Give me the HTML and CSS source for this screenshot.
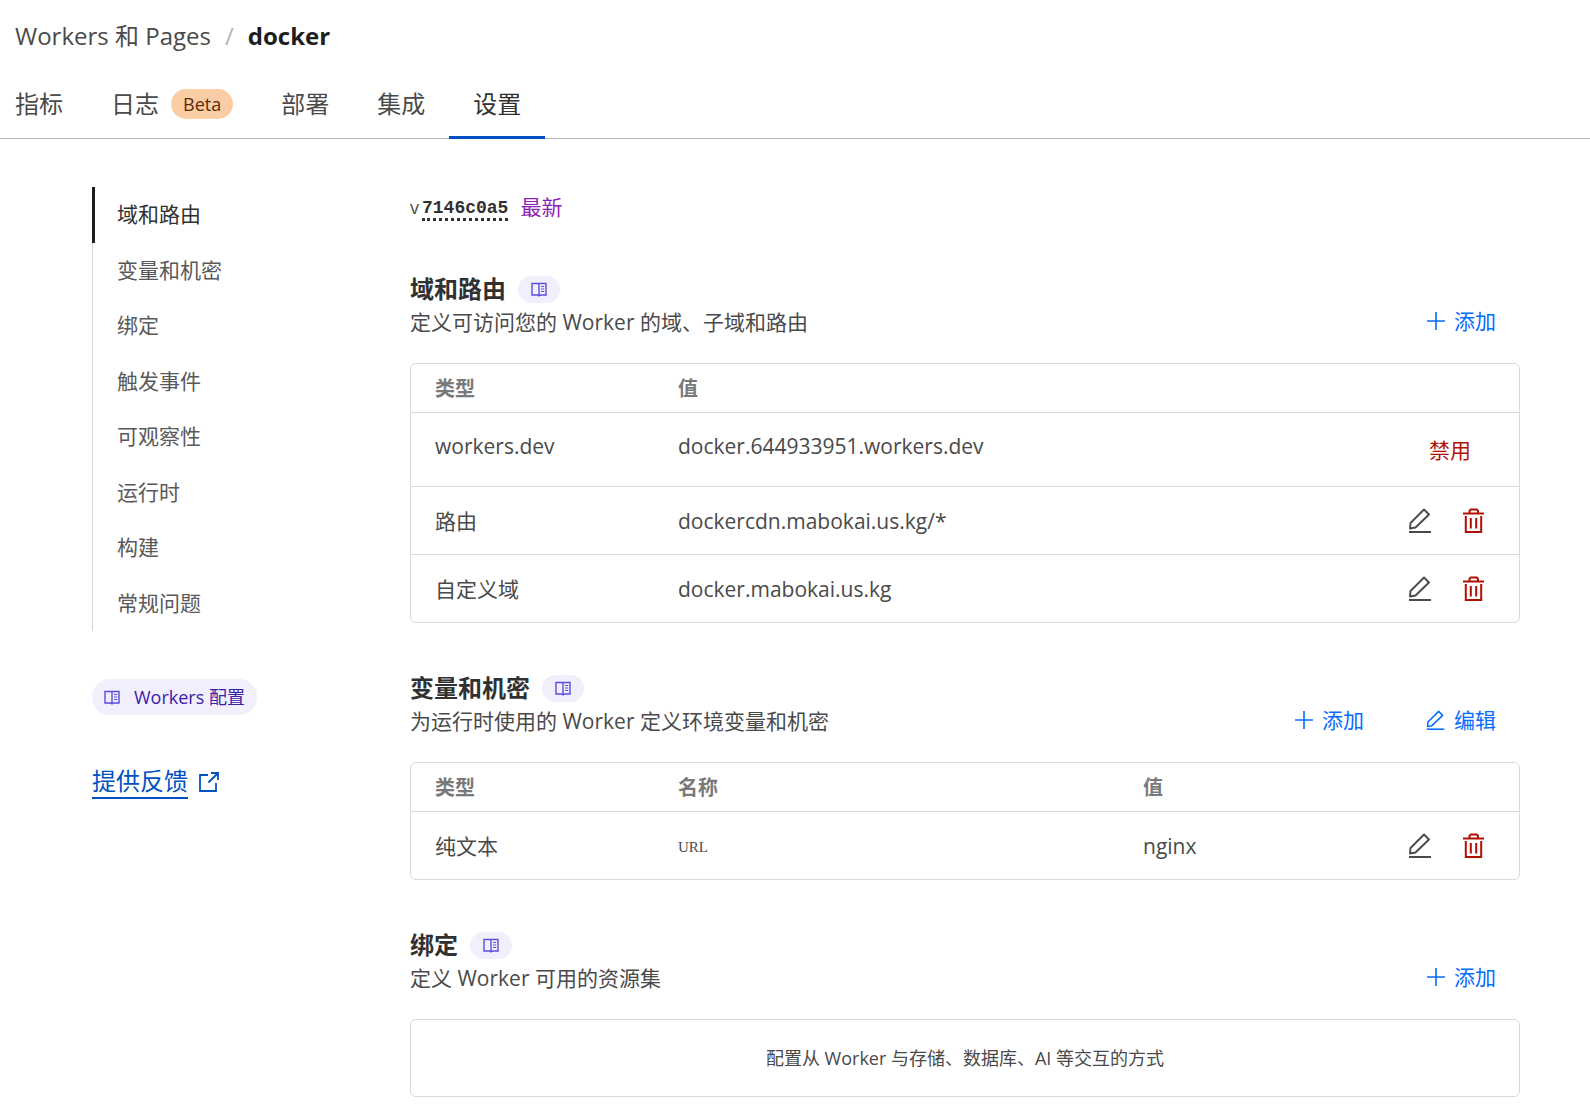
FILE: index.html
```html
<!DOCTYPE html>
<html lang="zh-CN">
<head>
<meta charset="utf-8">
<meta name="viewport" content="width=device-width, initial-scale=1">
<title>docker - Workers 和 Pages</title>
<link rel="stylesheet" href="styles.css">
</head>
<body>
<svg class="sprite" aria-hidden="true">
  <symbol id="i-book" viewBox="0 0 16 15">
    <path d="M8 1.500 H1 V13 H6.500 L8 14 L9.500 13 H15 V1.500 H8 Z M8 1.500 V13.500" fill="none" stroke="currentColor" stroke-width="1.400"/>
    <path d="M10 4.500 H13.200 M10 7 H13.200 M10 9.500 H13.200" fill="none" stroke="currentColor"/>
  </symbol>
  <symbol id="i-plus" viewBox="0 0 18 18">
    <path d="M9 0 V18 M0 9 H18" fill="none" stroke="currentColor" stroke-width="1.600"/>
  </symbol>
  <symbol id="i-pen" viewBox="0 0 24 26">
    <path d="M2 20.500 L2.500 15 L16 1.500 L21 6.500 L7.500 19.500 Z" fill="none" stroke="currentColor" stroke-width="1.900" stroke-linejoin="round"/>
    <path d="M1 24 H23" fill="none" stroke="currentColor" stroke-width="2"/>
  </symbol>
  <symbol id="i-trash" viewBox="0 0 21 26">
    <path d="M0 5.500 H21 M6.500 5.500 V2.800 L7.700 1.600 H13.800 L15 2.800 V5.500 M2.800 8 V24 H18.200 V8 M7.800 10 V20.500 M13.200 10 V20.500" fill="none" stroke="currentColor" stroke-width="2"/>
  </symbol>
  <symbol id="i-external" viewBox="0 0 20 20">
    <path d="M9 3 H1 V19 H17 V11 M12 1 H19 V8 M19 1 L9.500 10.500" fill="none" stroke="currentColor" stroke-width="1.800"/>
  </symbol>
</svg>

<header>
  <nav class="breadcrumb" aria-label="路径">
    <a href="#">Workers 和 Pages</a>
    <span class="slash">/</span>
    <strong>docker</strong>
  </nav>
  <nav class="tabs" aria-label="标签">
    <a class="tab" href="#">指标</a>
    <a class="tab" href="#">日志<span class="beta">Beta</span></a>
    <a class="tab" href="#">部署</a>
    <a class="tab" href="#">集成</a>
    <a class="tab tab-active" href="#" aria-current="page">设置</a>
  </nav>
</header>

<div class="layout">
  <aside>
    <ul class="toc">
      <li class="toc-active"><a href="#domains">域和路由</a></li>
      <li><a href="#variables">变量和机密</a></li>
      <li><a href="#bindings">绑定</a></li>
      <li><a href="#">触发事件</a></li>
      <li><a href="#">可观察性</a></li>
      <li><a href="#">运行时</a></li>
      <li><a href="#">构建</a></li>
      <li><a href="#">常规问题</a></li>
    </ul>
    <a class="doc-pill" href="#"><svg class="book"><use href="#i-book"/></svg>Workers 配置</a>
    <a class="feedback" href="#"><span>提供反馈</span><svg class="external"><use href="#i-external"/></svg></a>
  </aside>

  <main>
    <div class="version"><span class="v">v</span><code>7146c0a5</code><span class="latest">最新</span></div>

    <section id="domains">
      <div class="section-head">
        <div>
          <h2>域和路由 <a class="book-badge" href="#" aria-label="文档"><svg class="book"><use href="#i-book"/></svg></a></h2>
          <p>定义可访问您的 Worker 的域、子域和路由</p>
        </div>
        <div class="head-actions">
          <button type="button"><svg class="plus"><use href="#i-plus"/></svg>添加</button>
        </div>
      </div>
      <table>
        <thead><tr><th class="col-type">类型</th><th>值</th><th class="col-actions"></th></tr></thead>
        <tbody>
          <tr class="row-tall">
            <td>workers.dev</td><td>docker.644933951.workers.dev</td>
            <td><div class="row-actions"><button class="disable" type="button">禁用</button></div></td>
          </tr>
          <tr>
            <td>路由</td><td>dockercdn.mabokai.us.kg/*</td>
            <td><div class="row-actions">
              <button type="button" aria-label="编辑"><svg class="pen"><use href="#i-pen"/></svg></button>
              <button class="delete" type="button" aria-label="删除"><svg class="trash"><use href="#i-trash"/></svg></button>
            </div></td>
          </tr>
          <tr>
            <td>自定义域</td><td>docker.mabokai.us.kg</td>
            <td><div class="row-actions">
              <button type="button" aria-label="编辑"><svg class="pen"><use href="#i-pen"/></svg></button>
              <button class="delete" type="button" aria-label="删除"><svg class="trash"><use href="#i-trash"/></svg></button>
            </div></td>
          </tr>
        </tbody>
      </table>
    </section>

    <section id="variables">
      <div class="section-head">
        <div>
          <h2>变量和机密 <a class="book-badge" href="#" aria-label="文档"><svg class="book"><use href="#i-book"/></svg></a></h2>
          <p>为运行时使用的 Worker 定义环境变量和机密</p>
        </div>
        <div class="head-actions">
          <button type="button"><svg class="plus"><use href="#i-plus"/></svg>添加</button>
          <button type="button"><svg class="pen-small"><use href="#i-pen"/></svg>编辑</button>
        </div>
      </div>
      <table>
        <thead><tr><th class="col-type">类型</th><th class="col-name">名称</th><th>值</th><th class="col-actions"></th></tr></thead>
        <tbody>
          <tr>
            <td>纯文本</td><td class="var-name">URL</td><td>nginx</td>
            <td><div class="row-actions">
              <button type="button" aria-label="编辑"><svg class="pen"><use href="#i-pen"/></svg></button>
              <button class="delete" type="button" aria-label="删除"><svg class="trash"><use href="#i-trash"/></svg></button>
            </div></td>
          </tr>
        </tbody>
      </table>
    </section>

    <section id="bindings">
      <div class="section-head">
        <div>
          <h2>绑定 <a class="book-badge" href="#" aria-label="文档"><svg class="book"><use href="#i-book"/></svg></a></h2>
          <p>定义 Worker 可用的资源集</p>
        </div>
        <div class="head-actions">
          <button type="button"><svg class="plus"><use href="#i-plus"/></svg>添加</button>
        </div>
      </div>
      <div class="empty">配置从 Worker 与存储、数据库、AI 等交互的方式</div>
    </section>
  </main>
</div>
</body>
</html>
```

FILE: styles.css
```css
* { box-sizing: border-box; }

body {
  margin: 0;
  background: #fff;
  color: #4a4a4a;
  font: 21px/32px "Open Sans", "Noto Sans CJK SC", sans-serif;
}

a { color: inherit; text-decoration: none; }

button {
  display: flex;
  align-items: center;
  padding: 0;
  border: 0;
  background: none;
  color: inherit;
  font: inherit;
  cursor: pointer;
}

svg { display: block; flex: none; }
.sprite { display: none; }
.book { width: 16px; height: 15px; color: #5a4ee0; }
.plus { width: 18px; height: 18px; }
.pen { width: 24px; height: 26px; }
.pen-small { width: 19px; height: 21px; }
.trash { width: 21px; height: 26px; }
.external { width: 20px; height: 20px; }

/* Header */
.breadcrumb {
  display: flex;
  gap: 14px;
  padding: 20px 15px 0;
  font-size: 24px;
}
.slash { color: #b5b5b5; }
.breadcrumb strong { color: #1d1d1d; }

.tabs {
  display: flex;
  margin-top: 16px;
  padding-right: 15px;
  border-bottom: 1px solid #b5b5b5;
  font-size: 24px;
}
.tab {
  display: flex;
  align-items: center;
  gap: 12px;
  height: 71px;
  margin-bottom: -1px;
  padding: 3px 24px 0;
  border-bottom: 3px solid transparent;
}
.tab:first-child { padding-left: 15px; }
.tab-active { border-color: #0051c3; color: #313131; }
.beta {
  padding: 0 12px;
  border-radius: 15px;
  background: #fbcda5;
  color: #5c2a05;
  font-size: 18px;
  line-height: 30px;
}

/* Two-column body */
.layout {
  display: grid;
  grid-template-columns: 270px minmax(0, 1fr);
  gap: 48px;
  padding: 48px 70px 8px 92px;
}

aside {
  display: flex;
  flex-direction: column;
  align-items: flex-start;
}
.toc {
  display: flex;
  flex-direction: column;
  align-self: stretch;
  min-height: 444px;
  margin: 0;
  padding: 0;
  list-style: none;
  color: #595959;
}
.toc li {
  display: flex;
  flex: 1;
  align-items: center;
  padding: 0 0 1px 24px;
  border-left: 1px solid #d5d5d5;
}
.toc .toc-active {
  padding-left: 22px;
  border-left: 3px solid #1d1d1d;
  color: #313131;
}
.doc-pill {
  display: flex;
  align-items: center;
  gap: 14px;
  margin-top: 48px;
  padding: 0 12px;
  border-radius: 18px;
  background: #f2effd;
  color: #3a22a8;
  font-size: 18px;
  line-height: 36px;
}
.feedback {
  display: flex;
  align-items: center;
  gap: 11px;
  margin-top: 50px;
  color: #0051c3;
  font-size: 24px;
}
.feedback span { border-bottom: 2px solid currentColor; }

/* Content */
.version {
  display: flex;
  align-items: center;
  height: 40px;
  margin-bottom: 46px;
}
.v { margin-right: 3px; font-size: 18px; }
.version code {
  padding-top: 4px;
  border-bottom: 3px dotted #313131;
  color: #313131;
  font: bold 18px/20px "Liberation Mono", monospace;
}
.latest { margin-left: 12px; color: #8e1fb5; }

section { margin-bottom: 49px; }
section:last-child { margin-bottom: 0; }
.section-head {
  display: flex;
  justify-content: space-between;
  align-items: flex-end;
  margin-bottom: 25px;
}
h2 {
  display: flex;
  align-items: center;
  gap: 12px;
  margin: 0;
  color: #313131;
  font-size: 24px;
  line-height: 32px;
}
p { margin: 1px 0 0; }
.book-badge {
  display: flex;
  align-items: center;
  justify-content: center;
  width: 42px;
  height: 27px;
  border-radius: 14px;
  background: #f2effd;
}
.head-actions {
  display: flex;
  gap: 62px;
  padding: 0 24px 1px 0;
  color: #056dff;
}
.head-actions button { gap: 9px; }

table {
  width: 100%;
  border: 1px solid #d9d9d9;
  border-spacing: 0;
  border-radius: 6px;
  table-layout: fixed;
}
th, td { padding: 0 0 0 24px; text-align: left; }
th {
  height: 49px;
  padding-top: 2px;
  border-bottom: 1px solid #d9d9d9;
  color: #797979;
  font-size: 20px;
}
td { height: 67px; }
tr:not(:last-child) td { height: 68px; border-bottom: 1px solid #d9d9d9; }
.row-tall:not(:last-child) td { height: 74px; }
.row-tall td:not(:last-child) { padding-bottom: 8px; }
.col-type { width: 243px; }
.col-name { width: 465px; }
.col-actions { width: 180px; }
.var-name { padding-top: 3px; font-family: "Liberation Serif", serif; font-size: 15px; }
.row-actions {
  display: flex;
  justify-content: flex-end;
  gap: 31px;
  padding-right: 35px;
}
.delete, .disable { color: #b20f03; }
.disable { margin-right: 13px; }

.empty {
  padding: 22px 24px;
  border: 1px solid #d9d9d9;
  border-radius: 6px;
  font-size: 18px;
  text-align: center;
}
```
